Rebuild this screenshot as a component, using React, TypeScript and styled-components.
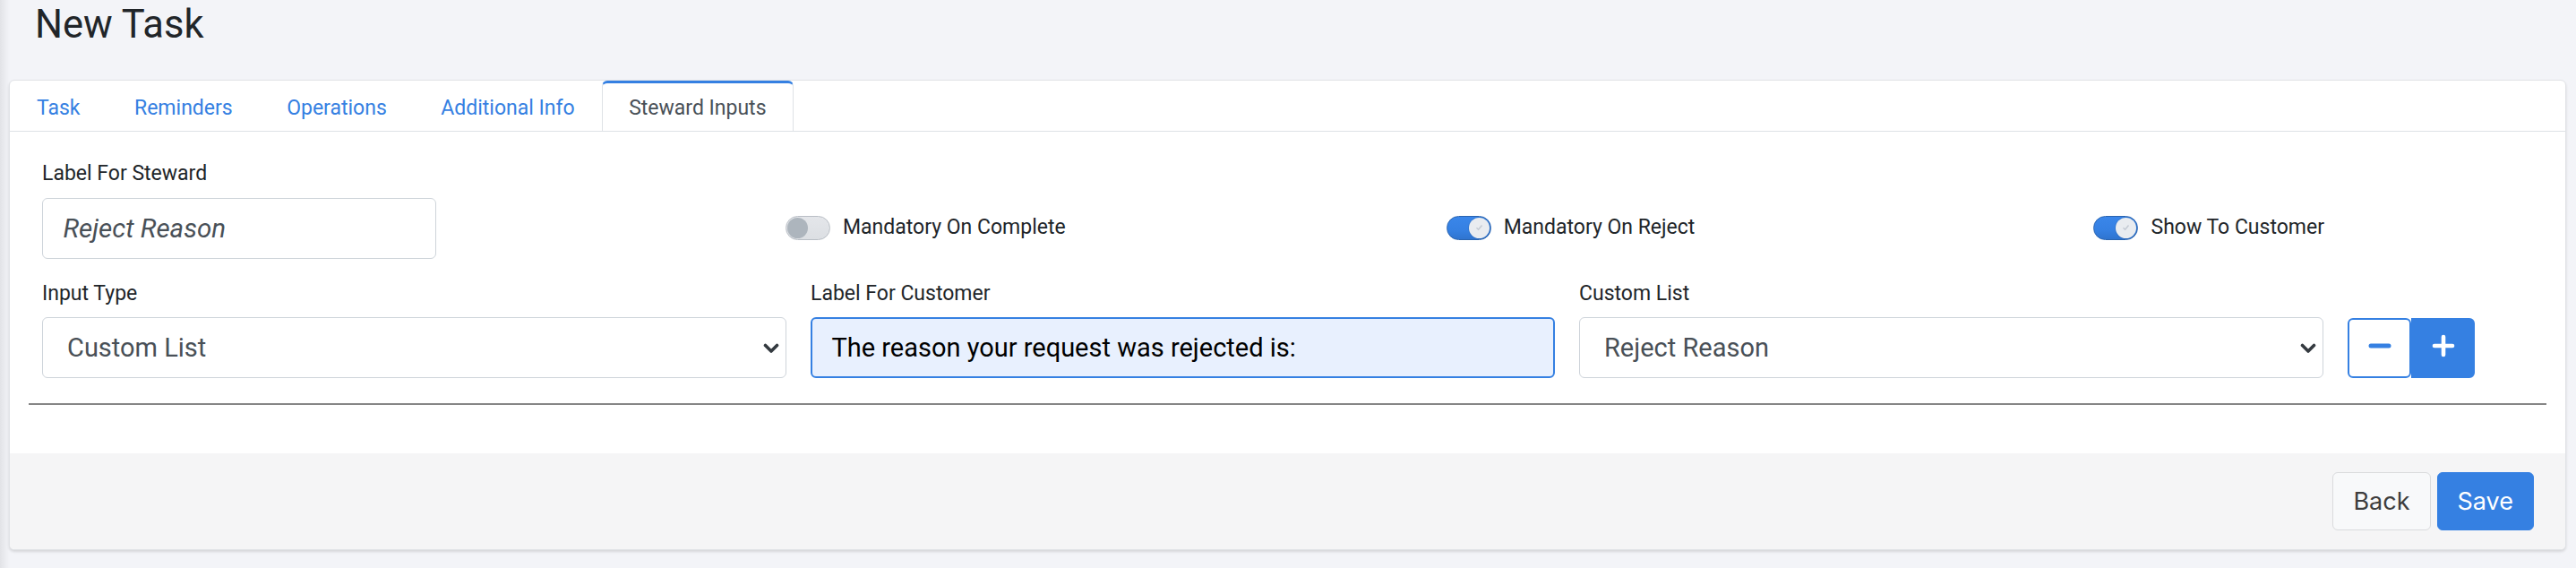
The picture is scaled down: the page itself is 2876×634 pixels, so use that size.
import React from 'react';
import styled, { createGlobalStyle, css } from 'styled-components';

const BLUE = '#3580e2';
const SMALL = '23px';
const SMALL_LH = '33.6px';
const LARGE = '29px';

const GlobalStyle = createGlobalStyle`
  html, body { margin: 0; padding: 0; }
  body {
    background: #f3f4f8;
    font-family: Roboto, "Noto Sans", sans-serif;
    color: #212529;
  }
  *, *::before, *::after { box-sizing: border-box; }
`;

const Page = styled.div`
  min-height: 634px;
  padding: 1px 11px 0 10px;
  background: linear-gradient(90deg, #e2e3e7 0px, #eaebef 5px, #f3f4f8 11px);
`;

const Title = styled.h2`
  margin: 0 0 35px;
  padding-left: 29px;
  font-size: 43.5px;
  font-weight: 400;
  line-height: 53px;
  color: #212529;
`;

const Card = styled.div`
  background: #fff;
  border: 1px solid #e1e3e7;
  border-radius: 6px;
  box-shadow: 0 2px 3px rgba(0, 0, 0, 0.12);
  overflow: hidden;
`;

const TabBar = styled.div`
  display: flex;
  border-bottom: 1px solid #dee2e6;
`;

const Tab = styled.div<{ $active?: boolean }>`
  padding: 10.5px 29.5px 9px 29px;
  border: 1px solid transparent;
  border-top-width: 3px;
  margin-bottom: -1px;
  font-size: ${SMALL};
  line-height: ${SMALL_LH};
  color: ${BLUE};
  cursor: pointer;
  ${(p) =>
    p.$active &&
    css`
      border-color: #dee2e6;
      border-top-color: ${BLUE};
      border-radius: 6px 6px 0 0;
      background: #fff;
      color: #495057;
    `}
`;

const CardBody = styled.div`
  padding: 30px 21px 54px;
`;

const FormArea = styled.div`
  padding: 0 15px;
`;

const FieldsRow = styled.div<{ $cols: string; $right: number }>`
  display: grid;
  grid-template-columns: ${(p) => p.$cols};
  column-gap: 27px;
  align-items: end;
  margin-right: ${(p) => p.$right}px;
  & + & {
    margin-top: 22px;
  }
`;

const Field = styled.div`
  display: flex;
  flex-direction: column;
`;

const Label = styled.label`
  display: block;
  font-size: ${SMALL};
  line-height: ${SMALL_LH};
  margin-bottom: 10px;
  color: #212529;
`;

const TextInput = styled.input<{ $italic?: boolean; $filled?: boolean }>`
  height: 68px;
  width: 100%;
  padding: 0 22.4px;
  font-family: Roboto, sans-serif;
  font-size: ${LARGE};
  font-style: ${(p) => (p.$italic ? 'italic' : 'normal')};
  color: #495057;
  background: #fff;
  border: 1px solid #ced4da;
  border-radius: 6px;
  outline: none;
  ${(p) =>
    p.$italic &&
    css`
      font-size: 29.5px;
    `}
  ${(p) =>
    p.$filled &&
    css`
      background: #e8f0fe;
      border: 2px solid ${BLUE};
      color: #000;
      padding: 0 21.4px;
    `}
`;

const SelectWrap = styled.div`
  position: relative;
`;

const Select = styled.select`
  appearance: none;
  -webkit-appearance: none;
  width: 100%;
  height: 68px;
  padding: 0 50px 0 27px;
  font-family: Roboto, sans-serif;
  font-size: ${LARGE};
  color: #495057;
  background: #fff;
  border: 1px solid #ced4da;
  border-radius: 6px;
  outline: none;
`;

const Chevron = styled.svg`
  position: absolute;
  right: 8px;
  top: 50%;
  width: 18px;
  height: 12px;
  margin-top: -5px;
  pointer-events: none;
`;

const ToggleCell = styled.div`
  height: 68px;
  display: flex;
  align-items: center;
  justify-content: flex-end;
  gap: 14px;
  padding-bottom: 1px;
`;

const Track = styled.span<{ $on?: boolean }>`
  position: relative;
  width: 50px;
  height: 27px;
  border-radius: 14px;
  flex-shrink: 0;
  border: 1px solid ${(p) => (p.$on ? '#2a64b0' : '#b9bec5')};
  background: ${(p) =>
    p.$on
      ? `linear-gradient(180deg, #3a86ea 0%, ${BLUE} 60%, #2f74cf 100%)`
      : 'linear-gradient(180deg, #e4e6ea 0%, #dcdfe3 100%)'};
`;

const Knob = styled.span<{ $on?: boolean }>`
  position: absolute;
  top: 1px;
  left: ${(p) => (p.$on ? '24px' : '1px')};
  width: 23px;
  height: 23px;
  border-radius: 50%;
  background: ${(p) => (p.$on ? '#e9ecf0' : '#adb5bd')};
  box-shadow: ${(p) => (p.$on ? '0 0 0 1px rgba(0,0,0,0.08)' : 'none')};
  display: flex;
  align-items: center;
  justify-content: center;
`;

const ToggleText = styled.span`
  font-size: ${SMALL};
  line-height: ${SMALL_LH};
  color: #212529;
`;

const StepGroup = styled.div`
  display: flex;
`;

const StepButton = styled.button<{ $primary?: boolean }>`
  width: 71px;
  height: 67px;
  display: flex;
  align-items: center;
  justify-content: center;
  padding: 0 0 5px;
  border: 2px solid ${BLUE};
  background: ${(p) => (p.$primary ? BLUE : '#fff')};
  border-radius: ${(p) => (p.$primary ? '0 6px 6px 0' : '6px')};
  cursor: pointer;
`;

const Divider = styled.hr`
  margin: 28px 0 0;
  border: 0;
  border-top: 2px solid #868686;
`;

const Footer = styled.div`
  background: #f5f5f6;
  padding: 21px 35px 21px;
  display: flex;
  justify-content: flex-end;
  gap: 7px;
`;

const FooterButton = styled.button<{ $primary?: boolean }>`
  height: 65px;
  padding: 0 22px;
  font-family: Inter, "Liberation Sans", sans-serif;
  font-size: 27px;
  border-radius: 6px;
  cursor: pointer;
  border: 1px solid ${(p) => (p.$primary ? BLUE : '#dadbdd')};
  background: ${(p) => (p.$primary ? BLUE : '#f8f9fa')};
  color: ${(p) => (p.$primary ? '#fff' : '#3d3d3d')};
`;

const Toggle = ({ on, label }: { on?: boolean; label: string }) => (
  <ToggleCell>
    <Track $on={on}>
      <Knob $on={on}>
        {on && (
          <svg width="9" height="8" viewBox="0 0 9 8">
            <path d="M1.5 4.2 L3.6 6.3 L7.5 1.5" fill="none" stroke="#c3c9d2" strokeWidth="1.4" />
          </svg>
        )}
      </Knob>
    </Track>
    <ToggleText>{label}</ToggleText>
  </ToggleCell>
);

const ChevronIcon = () => (
  <Chevron viewBox="0 0 18 12">
    <path d="M2.5 2.5 L9 9 L15.5 2.5" fill="none" stroke="#343a40" strokeWidth="3.6" strokeLinecap="round" strokeLinejoin="round" />
  </Chevron>
);

const tabs = ['Task', 'Reminders', 'Operations', 'Additional Info', 'Steward Inputs'];

export default function App() {
  return (
    <>
      <GlobalStyle />
      <Page>
        <Title>New Task</Title>
        <Card>
          <TabBar>
            {tabs.map((t) => (
              <Tab key={t} $active={t === 'Steward Inputs'}>
                {t}
              </Tab>
            ))}
          </TabBar>
          <CardBody>
            <FormArea>
              <FieldsRow $cols="440px repeat(3, 1fr)" $right={233}>
                <Field>
                  <Label>Label For Steward</Label>
                  <TextInput $italic defaultValue="Reject Reason" />
                </Field>
                <Toggle label="Mandatory On Complete" />
                <Toggle on label="Mandatory On Reject" />
                <Toggle on label="Show To Customer" />
              </FieldsRow>
              <FieldsRow $cols="repeat(3, 1fr) auto" $right={65}>
                <Field>
                  <Label>Input Type</Label>
                  <SelectWrap>
                    <Select defaultValue="Custom List">
                      <option>Custom List</option>
                      <option>Text</option>
                    </Select>
                    <ChevronIcon />
                  </SelectWrap>
                </Field>
                <Field>
                  <Label>Label For Customer</Label>
                  <TextInput $filled defaultValue="The reason your request was rejected is:" />
                </Field>
                <Field>
                  <Label>Custom List</Label>
                  <SelectWrap>
                    <Select defaultValue="Reject Reason">
                      <option>Reject Reason</option>
                    </Select>
                    <ChevronIcon />
                  </SelectWrap>
                </Field>
                <StepGroup>
                  <StepButton aria-label="remove">
                    <svg width="26" height="6" viewBox="0 0 26 6">
                      <line x1="3" y1="3" x2="23" y2="3" stroke={BLUE} strokeWidth="5" strokeLinecap="round" />
                    </svg>
                  </StepButton>
                  <StepButton $primary aria-label="add">
                    <svg width="28" height="28" viewBox="0 0 28 28">
                      <line x1="4" y1="14" x2="24" y2="14" stroke="#fff" strokeWidth="4.6" strokeLinecap="round" />
                      <line x1="14" y1="4" x2="14" y2="24" stroke="#fff" strokeWidth="4.6" strokeLinecap="round" />
                    </svg>
                  </StepButton>
                </StepGroup>
              </FieldsRow>
            </FormArea>
            <Divider />
          </CardBody>
          <Footer>
            <FooterButton>Back</FooterButton>
            <FooterButton $primary>Save</FooterButton>
          </Footer>
        </Card>
      </Page>
    </>
  );
}
